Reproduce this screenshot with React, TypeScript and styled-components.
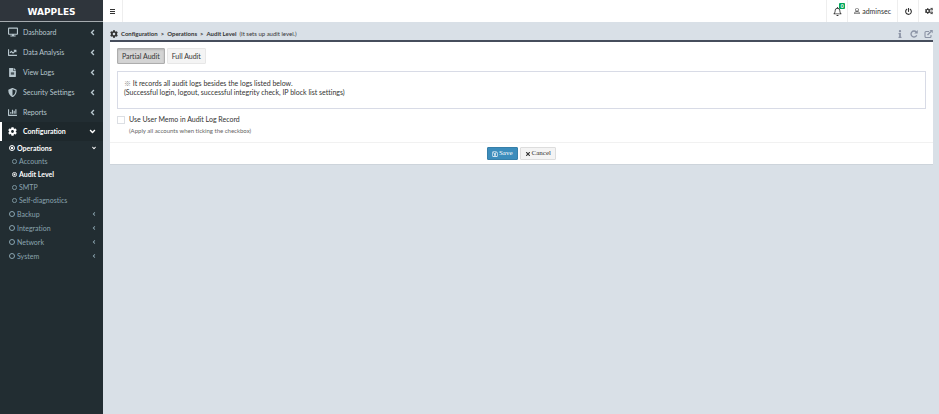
import React from "react";
import styled, { createGlobalStyle, css } from "styled-components";
import {
  FaChartBar,
  FaChartLine,
  FaCog,
  FaCogs,
  FaDesktop,
  FaFileAlt,
  FaInfo,
  FaPowerOff,
  FaRegBell,
  FaRegSave,
  FaRegUser,
  FaShieldAlt,
  FaTimes,
  FaAngleLeft,
  FaAngleDown,
} from "react-icons/fa";

const GlobalStyle = createGlobalStyle`
  *, *::before, *::after { box-sizing: border-box; }
  html, body, #root { height: 100%; }
  body {
    margin: 0;
    background: #d9e0e7;
    color: #333;
    font-family: Lato, "Noto Sans CJK KR", sans-serif;
    font-size: 7px;
    font-variant-ligatures: none;
    line-height: 9px;
  }
  ul { list-style: none; margin: 0; padding: 0; }
  a { color: inherit; text-decoration: none; }
  button { font: inherit; cursor: pointer; }
  svg { display: block; flex: none; }
`;

const Layout = styled.div`
  display: flex;
  min-height: 100%;
`;

const Sidebar = styled.aside`
  flex: none;
  width: 103px;
  background: #222d32;
  color: #b8c7ce;
`;

const Brand = styled.a`
  display: flex;
  align-items: center;
  justify-content: center;
  height: 22px;
  padding-top: 4px;
  background: #2f353c;
  border-bottom: 1px solid #a5abaf;
  color: #fff;
  font-family: "DejaVu Sans", sans-serif;
  font-size: 9px;
  font-weight: 700;
`;

const MenuLink = styled.a<{ $active?: boolean }>`
  display: flex;
  align-items: center;
  gap: 6px;
  height: 20px;
  padding: 0 6px 0 ${(p) => (p.$active ? "6px" : "8px")};
  ${(p) =>
    p.$active &&
    css`
      height: 19px;
      border-left: 2px solid #fff;
      background: #1e282c;
      color: #fff;
      font-weight: 700;
    `}
`;

const MenuIcon = styled.span`
  display: flex;
  width: 9px;
  font-size: 9px;
`;

const MenuText = styled.span`
  flex: 1;
  white-space: nowrap;
`;

const SubLink = styled.a<{ $level: 1 | 2; $active?: boolean }>`
  display: flex;
  align-items: center;
  gap: 2px;
  height: ${(p) => (p.$level === 1 ? "14px" : "13px")};
  padding: 0 6px 0 ${(p) => (p.$level === 1 ? "9px" : "12px")};
  color: ${(p) => (p.$active ? "#fff" : "#8aa4af")};
  font-weight: ${(p) => (p.$active ? 700 : 400)};
`;

const Main = styled.div`
  flex: 1;
  min-width: 0;
`;

const TopBar = styled.header`
  display: flex;
  height: 22px;
  background: #fff;
  color: #333;
`;

const barItem = css`
  display: flex;
  align-items: center;
  justify-content: center;
  gap: 2px;
  border: 0 solid #eee;
  background: none;
  color: inherit;
  padding: 0;
`;

const MenuToggle = styled.button`
  ${barItem}
  width: 20px;
  border-right-width: 1px;
`;

const TopActions = styled.div`
  display: flex;
  margin-left: auto;
`;

const TopButton = styled.button<{ $wide?: boolean }>`
  ${barItem}
  position: relative;
  border-left-width: 1px;
  padding: 0 ${(p) => (p.$wide ? "6px" : "0")};
  min-width: 21px;
`;

const Badge = styled.span`
  position: absolute;
  top: 3px;
  right: 2px;
  width: 6px;
  height: 6px;
  border-radius: 1px;
  background: #00a65a;
  color: #fff;
  font-size: 5px;
  font-weight: 700;
  line-height: 6px;
  text-align: center;
`;

const Content = styled.main`
  padding: 5px 6px 5px 7px;
`;

const TitleBar = styled.div`
  display: flex;
  align-items: center;
  justify-content: space-between;
  height: 13px;
`;

const Breadcrumb = styled.nav`
  display: flex;
  align-items: center;
  gap: 3px;
  font-size: 6px;
  font-weight: 700;
`;

const Hint = styled.span`
  font-weight: 400;
`;

const PageTools = styled.div`
  display: flex;
  gap: 6px;
  color: #8b93a5;
`;

const ToolButton = styled.button`
  display: flex;
  border: 0;
  padding: 0;
  background: none;
  color: inherit;
`;

const Panel = styled.section`
  border-top: 2px solid #464d5c;
  border-bottom: 1px solid #cdd4db;
  background: #fff;
`;

const PanelBody = styled.div`
  padding: 6px 7px 7px;
`;

const Tabs = styled.div`
  display: flex;
  gap: 2px;
`;

const TabButton = styled.button<{ $active?: boolean }>`
  height: 16px;
  padding: 0 4px;
  border: 1px solid ${(p) => (p.$active ? "#adadad" : "#e7e7e7")};
  border-radius: 1px;
  background: ${(p) => (p.$active ? "#d4d4d4" : "#f4f4f4")};
  box-shadow: ${(p) => (p.$active ? "inset 0 1px 2px rgba(0,0,0,.15)" : "none")};
  color: #333;
`;

const Notice = styled.div`
  min-height: 38px;
  margin-top: 7px;
  padding: 7px 6px;
  border: 1px solid #d8dbe6;
`;

const NoticeLine = styled.p`
  margin: 0;
`;

const Mark = styled.span`
  color: #888;
`;

const Option = styled.label`
  display: flex;
  align-items: center;
  gap: 4px;
  margin-top: 6px;
`;

const CheckBox = styled.input`
  appearance: none;
  width: 8px;
  height: 8px;
  margin: 0;
  border: 1px solid #dcdfe4;
  background: #fff;
  &:checked { background: #3c8dbc; }
`;

const OptionNote = styled.p`
  margin: 2px 0 0 12px;
  color: #666;
  font-size: 6px;
`;

const PanelFooter = styled.footer`
  display: flex;
  justify-content: center;
  gap: 2px;
  padding: 4px 0;
  border-top: 1px solid #f1f1f1;
`;

const ActionButton = styled.button<{ $primary?: boolean }>`
  display: flex;
  align-items: center;
  gap: 1px;
  height: 13px;
  padding: 0 4px;
  border: 1px solid ${(p) => (p.$primary ? "#367fa9" : "#ddd")};
  border-radius: 1px;
  background: ${(p) => (p.$primary ? "#3c8dbc" : "#f4f4f4")};
  color: ${(p) => (p.$primary ? "#fff" : "#333")};
  font-family: "Liberation Serif", serif;
  font-size: 7px;
`;

const Ring = ({ size, dot }: { size: number; dot?: boolean }) => (
  <svg width={size} height={size} viewBox="0 0 12 12" fill="none" stroke="currentColor" strokeWidth="2" aria-hidden>
    <circle cx="6" cy="6" r="5" />
    {dot && <circle cx="6" cy="6" r="2.4" fill="currentColor" stroke="none" />}
  </svg>
);

const BarsIcon = () => (
  <svg width="5" height="5" viewBox="0 0 5 5" fill="currentColor" aria-hidden>
    <path d="M0 0h5v1H0zM0 2h5v1H0zM0 4h5v1H0z" />
  </svg>
);

const RefreshIcon = () => (
  <svg width="8" height="8" viewBox="0 0 16 16" fill="none" stroke="currentColor" strokeWidth="2.6" aria-hidden>
    <path d="M13.5 10.500A6 6 0 1 1 12.500 4" />
    <path d="M15.500 0v7h-7z" fill="currentColor" stroke="none" />
  </svg>
);

const ExternalIcon = () => (
  <svg width="9" height="8" viewBox="0 0 18 16" fill="none" stroke="currentColor" strokeWidth="2.2" aria-hidden>
    <path d="M10 3H4Q2 3 2 5v8q0 2 2 2h8q2 0 2-2v-3" />
    <path d="M7 10l7-7" strokeWidth="3" />
    <path d="M11 0h6.500v6.500z" fill="currentColor" stroke="none" />
  </svg>
);

const menu = [
  { text: "Dashboard", icon: <FaDesktop size={10} /> },
  { text: "Data Analysis", icon: <FaChartLine /> },
  { text: "View Logs", icon: <FaFileAlt /> },
  { text: "Security Settings", icon: <FaShieldAlt /> },
  { text: "Reports", icon: <FaChartBar /> },
];

export default function App() {
  return (
    <>
      <GlobalStyle />
      <Layout>
        <Sidebar>
          <Brand href="#">WAPPLES</Brand>
          <ul>
            {menu.map((m) => (
              <li key={m.text}>
                <MenuLink href="#">
                  <MenuIcon>{m.icon}</MenuIcon>
                  <MenuText>{m.text}</MenuText>
                  <FaAngleLeft size={9} />
                </MenuLink>
              </li>
            ))}
            <li>
              <MenuLink href="#" $active>
                <MenuIcon><FaCog /></MenuIcon>
                <MenuText>Configuration</MenuText>
                <FaAngleDown size={9} />
              </MenuLink>
              <ul>
                <li>
                  <SubLink href="#" $level={1} $active>
                    <Ring size={6} dot />
                    <MenuText>Operations</MenuText>
                    <FaAngleDown size={6} />
                  </SubLink>
                  <ul>
                    {["Accounts", "Audit Level", "SMTP", "Self-diagnostics"].map((t) => (
                      <li key={t}>
                        <SubLink href="#" $level={2} $active={t === "Audit Level"}>
                          <Ring size={5} dot={t === "Audit Level"} />
                          <MenuText>{t}</MenuText>
                        </SubLink>
                      </li>
                    ))}
                  </ul>
                </li>
                {["Backup", "Integration", "Network", "System"].map((t) => (
                  <li key={t}>
                    <SubLink href="#" $level={1}>
                      <Ring size={6} />
                      <MenuText>{t}</MenuText>
                      <FaAngleLeft size={6} />
                    </SubLink>
                  </li>
                ))}
              </ul>
            </li>
          </ul>
        </Sidebar>
        <Main>
          <TopBar>
            <MenuToggle aria-label="Toggle menu"><BarsIcon /></MenuToggle>
            <TopActions>
              <TopButton aria-label="Notifications">
                <FaRegBell size={9} />
                <Badge>0</Badge>
              </TopButton>
              <TopButton $wide><FaRegUser size={6} />adminsec</TopButton>
              <TopButton aria-label="Log out"><FaPowerOff size={7} /></TopButton>
              <TopButton aria-label="Settings"><FaCogs size={8} /></TopButton>
            </TopActions>
          </TopBar>
          <Content>
            <TitleBar>
              <Breadcrumb aria-label="Breadcrumb">
                <FaCog size={8} />
                <a href="#">Configuration</a>
                <span>&gt;</span>
                <a href="#">Operations</a>
                <span>&gt;</span>
                <span>Audit Level</span>
                <Hint>(It sets up audit level.)</Hint>
              </Breadcrumb>
              <PageTools>
                <ToolButton aria-label="Information"><FaInfo size={8} /></ToolButton>
                <ToolButton aria-label="Refresh"><RefreshIcon /></ToolButton>
                <ToolButton aria-label="Open in new window"><ExternalIcon /></ToolButton>
              </PageTools>
            </TitleBar>
            <Panel>
              <PanelBody>
                <Tabs>
                  <TabButton $active>Partial Audit</TabButton>
                  <TabButton>Full Audit</TabButton>
                </Tabs>
                <Notice>
                  <NoticeLine><Mark>※</Mark> It records all audit logs besides the logs listed below.</NoticeLine>
                  <NoticeLine>(Successful login, logout, successful integrity check, IP block list settings)</NoticeLine>
                </Notice>
                <Option>
                  <CheckBox type="checkbox" />
                  Use User Memo in Audit Log Record
                </Option>
                <OptionNote>(Apply all accounts when ticking the checkbox)</OptionNote>
              </PanelBody>
              <PanelFooter>
                <ActionButton $primary><FaRegSave size={6} />Save</ActionButton>
                <ActionButton><FaTimes size={6} />Cancel</ActionButton>
              </PanelFooter>
            </Panel>
          </Content>
        </Main>
      </Layout>
    </>
  );
}
